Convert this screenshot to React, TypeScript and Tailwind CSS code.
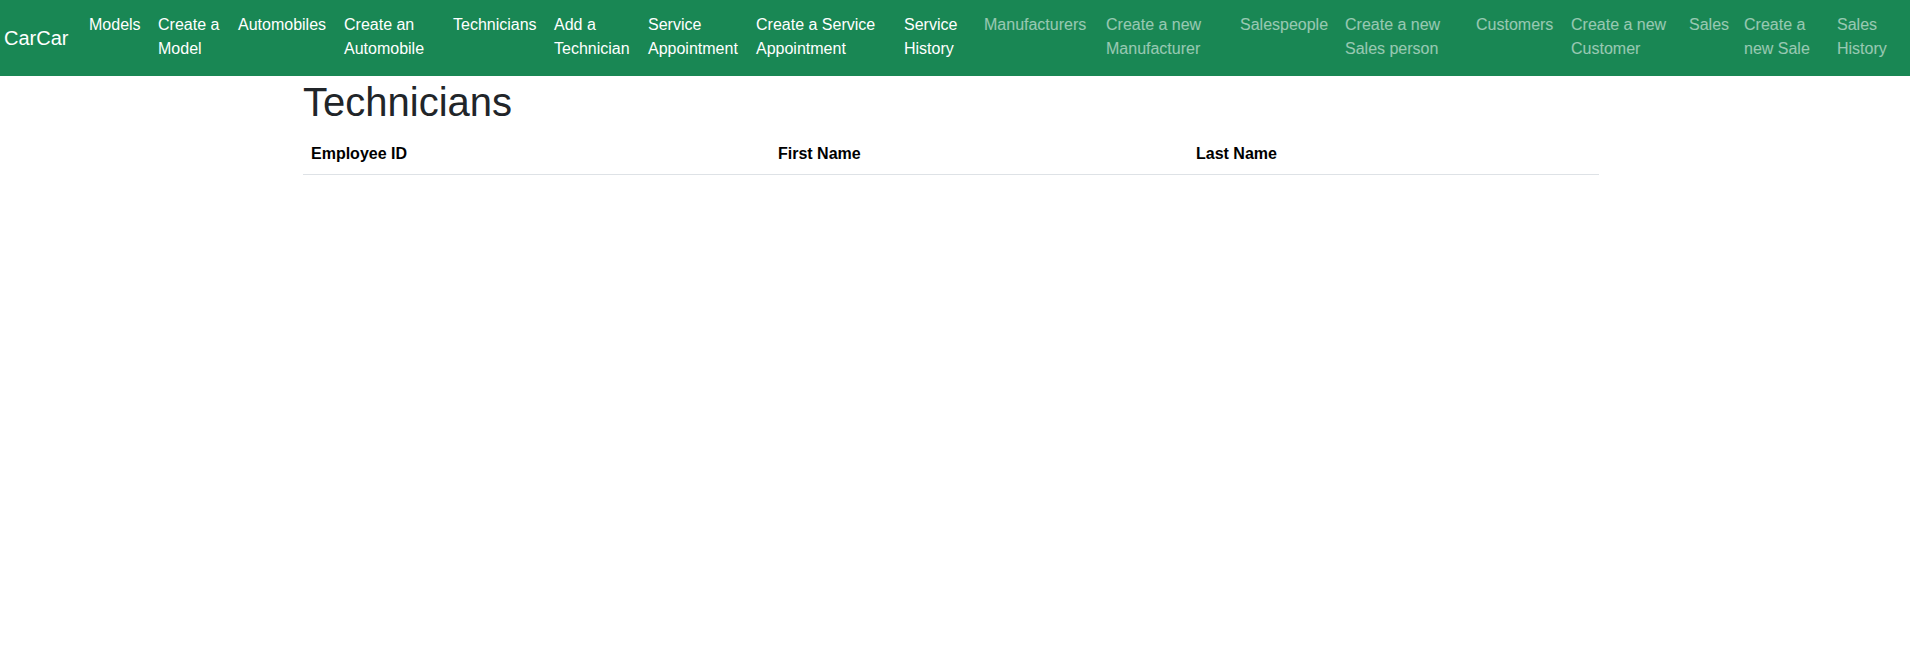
const navItems: { label: string; width: string; bright: boolean }[] = [
  { label: 'Models', width: 'w-[53px]', bright: true },
  { label: 'Create a Model', width: 'w-[64px]', bright: true },
  { label: 'Automobiles', width: 'w-[90px]', bright: true },
  { label: 'Create an Automobile', width: 'w-[93px]', bright: true },
  { label: 'Technicians', width: 'w-[85px]', bright: true },
  { label: 'Add a Technician', width: 'w-[78px]', bright: true },
  { label: 'Service Appointment', width: 'w-[92px]', bright: true },
  { label: 'Create a Service Appointment', width: 'w-[132px]', bright: true },
  { label: 'Service History', width: 'w-[64px]', bright: true },
  { label: 'Manufacturers', width: 'w-[106px]', bright: false },
  { label: 'Create a new Manufacturer', width: 'w-[118px]', bright: false },
  { label: 'Salespeople', width: 'w-[89px]', bright: false },
  { label: 'Create a new Sales person', width: 'w-[115px]', bright: false },
  { label: 'Customers', width: 'w-[79px]', bright: false },
  { label: 'Create a new Customer', width: 'w-[102px]', bright: false },
  { label: 'Sales', width: 'w-[39px]', bright: false },
  { label: 'Create a new Sale', width: 'w-[77px]', bright: false },
  { label: 'Sales History', width: 'w-[53px]', bright: false },
];

export default function App() {
  return (
    <div className="min-h-[645px] bg-white font-['Liberation_Sans','Arial',sans-serif] text-[#212529]">
      {/* Navbar */}
      <nav className="flex h-[76px] items-stretch bg-[#198754] pl-[4px]">
        <a href="#" className="mr-[8px] w-[69px] self-center text-[20px] leading-[30px] text-white">
          CarCar
        </a>
        <ul className="flex items-start pt-[13px]">
          {navItems.map((item) => (
            <li key={item.label} className="px-2">
              <a
                href="#"
                className={`block ${item.width} text-[16px] leading-[24px] ${
                  item.bright ? 'text-white' : 'text-white/55'
                }`}
              >
                {item.label}
              </a>
            </li>
          ))}
        </ul>
      </nav>

      {/* Content */}
      <div className="ml-[291px] w-[1320px] px-3 pt-[2px]">
        <h1 className="mb-2 text-[40px] font-normal leading-[48px]">Technicians</h1>
        <table className="w-full border-collapse text-left text-black">
          <thead>
            <tr className="border-b border-[#dee2e6]">
              <th className="w-[467px] p-2 text-[16px] font-bold leading-[24px]">Employee ID</th>
              <th className="w-[418px] p-2 text-[16px] font-bold leading-[24px]">First Name</th>
              <th className="p-2 text-[16px] font-bold leading-[24px]">Last Name</th>
            </tr>
          </thead>
          <tbody></tbody>
        </table>
      </div>
    </div>
  );
}
